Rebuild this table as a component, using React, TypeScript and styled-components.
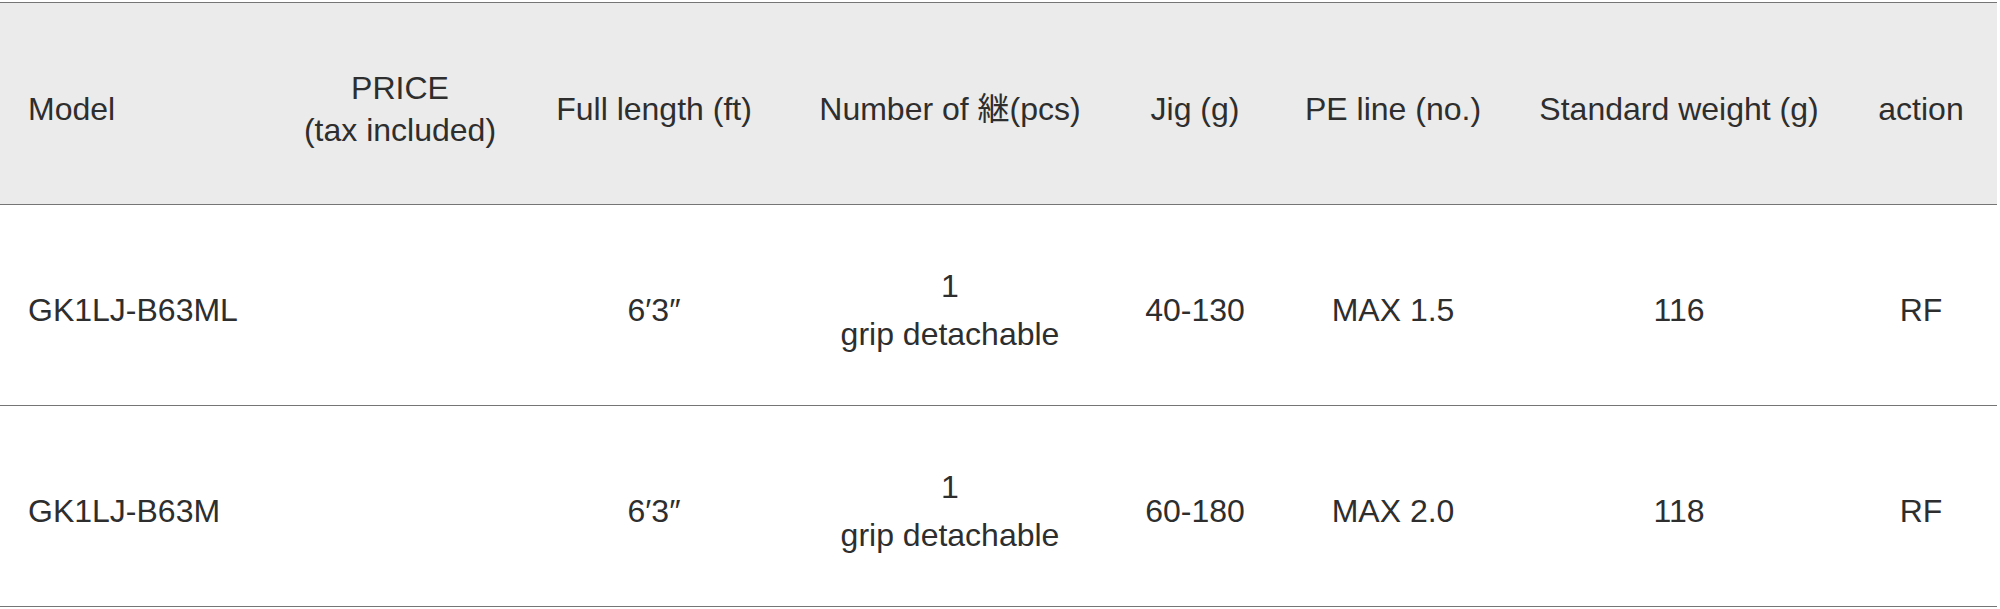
import React from 'react';
import styled, { createGlobalStyle } from 'styled-components';

const GlobalStyle = createGlobalStyle`
  html, body {
    margin: 0;
    padding: 0;
    background: #ffffff;
  }
  body {
    font-family: "Liberation Sans", "Noto Sans CJK JP", sans-serif;
    color: #2e2e2e;
  }
`;

const COLUMNS = '275px 250px 258px 334px 156px 240px 332px 152px';

const SpecTable = styled.div`
  width: 1997px;
  margin-top: 2px;
  border-top: 1px solid #757575;
`;

const HeaderRow = styled.div`
  display: grid;
  grid-template-columns: ${COLUMNS};
  height: 201px;
  background-color: #ebebeb;
  border-bottom: 1px solid #757575;
`;

const BodyRow = styled.div`
  display: grid;
  grid-template-columns: ${COLUMNS};
  height: 200px;
  border-bottom: 1px solid #757575;
`;

const Cell = styled.div<{ $left?: boolean; $head?: boolean }>`
  display: flex;
  flex-direction: column;
  justify-content: center;
  align-items: ${props => (props.$left ? 'flex-start' : 'center')};
  text-align: ${props => (props.$left ? 'left' : 'center')};
  padding: ${props => (props.$head ? '10px 0 0' : '9px 0 0')};
  padding-left: ${props => (props.$left ? '28px' : '0')};
  font-size: 32px;
  line-height: ${props => (props.$head ? '42px' : '48px')};
  white-space: nowrap;
  box-sizing: border-box;
`;

type Rod = {
  model: string;
  length: string;
  pieces: string;
  jig: string;
  pe: string;
  weight: string;
  action: string;
};

const rods: Rod[] = [
  {
    model: 'GK1LJ-B63ML',
    length: '6′3″',
    pieces: 'grip detachable',
    jig: '40-130',
    pe: 'MAX 1.5',
    weight: '116',
    action: 'RF',
  },
  {
    model: 'GK1LJ-B63M',
    length: '6′3″',
    pieces: 'grip detachable',
    jig: '60-180',
    pe: 'MAX 2.0',
    weight: '118',
    action: 'RF',
  },
];

const App = () => {
  return (
    <>
      <GlobalStyle />
      <SpecTable>
        <HeaderRow>
          <Cell $head $left>Model</Cell>
          <Cell $head>
            <span>PRICE</span>
            <span>(tax included)</span>
          </Cell>
          <Cell $head>Full length (ft)</Cell>
          <Cell $head>Number of 継(pcs)</Cell>
          <Cell $head>Jig (g)</Cell>
          <Cell $head>PE line (no.)</Cell>
          <Cell $head>Standard weight (g)</Cell>
          <Cell $head>action</Cell>
        </HeaderRow>
        {rods.map(rod => (
          <BodyRow key={rod.model}>
            <Cell $left>{rod.model}</Cell>
            <Cell></Cell>
            <Cell>{rod.length}</Cell>
            <Cell>
              <span>1</span>
              <span>{rod.pieces}</span>
            </Cell>
            <Cell>{rod.jig}</Cell>
            <Cell>{rod.pe}</Cell>
            <Cell>{rod.weight}</Cell>
            <Cell>{rod.action}</Cell>
          </BodyRow>
        ))}
      </SpecTable>
    </>
  );
};

export default App;
